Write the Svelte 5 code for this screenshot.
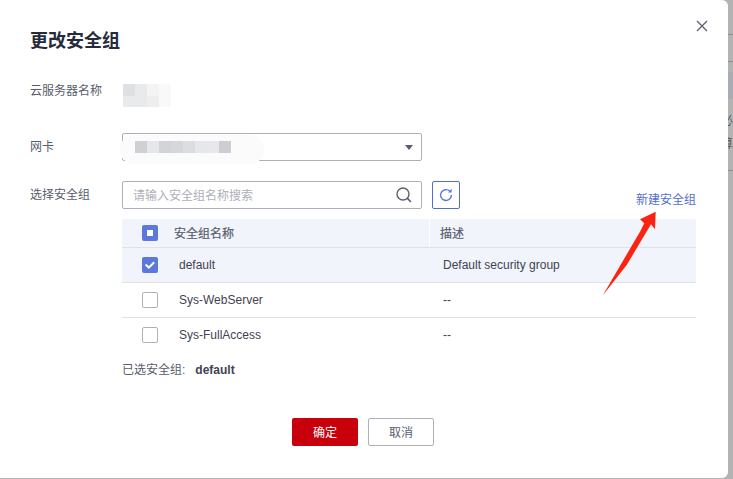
<script lang="ts">
	const groups = [
		{ name: 'default', desc: 'Default security group', checked: true },
		{ name: 'Sys-WebServer', desc: '--', checked: false },
		{ name: 'Sys-FullAccess', desc: '--', checked: false }
	];

	// mosaic cells over the redacted values
	const nameCells = ['#dfe0e3', '#e9eaec', '#f4f4f5', '#f8f9f9', '#e9eaec', '#e9eaec', '#eeeeef', '#f9f9fa'];
	const nicCells = ['#cfd0d4', '#e6e7e9', '#d3d4d8', '#d6d7da', '#dcdde0', '#e6e7e9', '#e8e8ea', '#cdced2'];
</script>

<div class="page">
	<div class="backdrop">
		<span class="bg-line one"></span>
		<span class="bg-line two"></span>
		<span class="bg-band"></span>
		<span class="bg-glyph first">必</span>
		<span class="bg-glyph second">算</span>
		<span class="bg-line three"></span>
	</div>

	<div class="dialog">
		<button class="close" aria-label="关闭">
			<svg width="12" height="12" viewBox="0 0 12 12"><path d="M1 1l10 10M11 1L1 11" stroke="#5c6070" stroke-width="1.3" fill="none" /></svg>
		</button>

		<h1>更改安全组</h1>

		<div class="row name-row">
			<div class="label">云服务器名称</div>
			<div class="mosaic small">
				{#each nameCells as c}
					<i style="background:{c}"></i>
				{/each}
			</div>
		</div>

		<div class="row nic-row">
			<div class="label">网卡</div>
			<div class="select">
				<div class="smear"></div>
				<div class="mosaic wide">
					{#each nicCells as c}
						<i style="background:{c}"></i>
					{/each}
				</div>
				<span class="caret"></span>
			</div>
		</div>

		<div class="row search-row">
			<div class="label">选择安全组</div>
			<div class="search">
				<span class="placeholder">请输入安全组名称搜索</span>
				<svg width="18" height="18" viewBox="0 0 18 18" fill="none" stroke="#5c6070" stroke-width="1.4">
					<circle cx="8" cy="8" r="6" />
					<path d="M12.4 12.4L16 16" stroke-width="1.6" />
				</svg>
			</div>
			<button class="refresh" aria-label="刷新">
				<svg width="16" height="16" viewBox="0 0 16 16" fill="none">
					<path d="M13.4 8a5.4 5.4 0 1 1-1.7-3.9" stroke="#5b78dd" stroke-width="1.4" />
					<path d="M13.6 1.8v3.6H10z" fill="#5b78dd" />
				</svg>
			</button>
			<a class="create" href="#new">新建安全组</a>
		</div>

		<div class="table">
			<div class="tr head">
				<div class="check-cell"><span class="box partial"><b></b></span></div>
				<div class="name-cell">安全组名称</div>
				<div class="desc-cell">描述</div>
			</div>
			{#each groups as g}
				<div class="tr" class:selected={g.checked}>
					<div class="check-cell">
						<span class="box" class:on={g.checked}>
							{#if g.checked}
								<svg width="16" height="16" viewBox="0 0 16 16" fill="none"><path d="M3.6 7.6l3.2 3 5.4-5.4" stroke="#fff" stroke-width="2" /></svg>
							{/if}
						</span>
					</div>
					<div class="name-cell">{g.name}</div>
					<div class="desc-cell">{g.desc}</div>
				</div>
			{/each}
		</div>

		<div class="chosen">
			<span class="chosen-label">已选安全组:</span>
			<strong>default</strong>
		</div>

		<div class="actions">
			<button class="btn primary">确定</button>
			<button class="btn">取消</button>
		</div>

		<svg class="arrow" width="60" height="90" viewBox="0 0 60 90">
			<path d="M1.7 85.5L39 21.7L43.3 13.3L39 9.3L54.7 1.7L54 19.3L50 14.3L25.7 55Z" fill="#fb2312" />
		</svg>
	</div>
</div>

<style>
	:global(body) {
		margin: 0;
	}

	.page {
		width: 733px;
		height: 479px;
		position: relative;
		overflow: hidden;
		background: #b3b3b3;
		font-family: 'Liberation Sans', 'Noto Sans CJK SC', sans-serif;
		font-size: 12px;
		color: #3f4352;
	}

	.backdrop {
		position: absolute;
		top: 0;
		right: 0;
		width: 5px;
		height: 479px;
		overflow: hidden;
	}

	.bg-line {
		position: absolute;
		left: 0;
		right: 0;
		height: 1px;
		background: #8e8f92;
	}

	.bg-line.one {
		top: 34px;
	}

	.bg-line.two {
		top: 61px;
	}

	.bg-line.three {
		top: 170px;
	}

	.bg-band {
		position: absolute;
		left: 0;
		right: 0;
		top: 72px;
		height: 27px;
		background: #a9acb2;
	}

	.bg-glyph {
		position: absolute;
		left: -7px;
		font-size: 12px;
		line-height: 14px;
		color: #5e5f63;
	}

	.bg-glyph.first {
		top: 114px;
	}

	.bg-glyph.second {
		top: 137px;
	}

	.dialog {
		position: relative;
		width: 728px;
		height: 478px;
		box-sizing: border-box;
		padding: 0 32px 0 30px;
		background: #fff;
		border-radius: 0 6px 6px 0;
	}

	.close {
		position: absolute;
		top: 20px;
		right: 20px;
		width: 12px;
		height: 12px;
		padding: 0;
		border: 0;
		background: none;
		display: flex;
	}

	h1 {
		margin: 0;
		padding-top: 29px;
		height: 24px;
		font-size: 18px;
		line-height: 24px;
		font-weight: 700;
		color: #252b3a;
		box-sizing: content-box;
	}

	.row {
		display: flex;
		align-items: center;
	}

	.label {
		width: 92px;
		flex: none;
		color: #575d6c;
		line-height: 16px;
	}

	.name-row {
		margin-top: 30px;
		height: 24px;
		align-items: flex-start;
	}

	.nic-row {
		margin-top: 26px;
		height: 28px;
	}

	.search-row {
		margin-top: 20px;
		height: 28px;
		position: relative;
	}

	.mosaic {
		display: grid;
		grid-template-columns: repeat(4, 12px);
	}

	.mosaic i {
		display: block;
		height: 11px;
	}

	.mosaic.small {
		margin: 1px 0 0 1px;
		filter: blur(0.3px);
	}

	.mosaic.small i {
		height: 11.5px;
	}

	.select,
	.search {
		position: relative;
		width: 300px;
		height: 28px;
		box-sizing: border-box;
		border: 1px solid #adb0b8;
		border-radius: 2px;
		display: flex;
		align-items: center;
		background: #fff;
	}

	.smear {
		position: absolute;
		left: -3px;
		top: 1px;
		width: 144px;
		height: 29px;
		border-radius: 14px;
		background: #fbfbfb;
	}

	.mosaic.wide {
		position: relative;
		margin-left: 12px;
		grid-template-columns: repeat(8, 12px);
	}

	.mosaic.wide i {
		height: 12px;
	}

	.caret {
		position: absolute;
		right: 8px;
		top: 11px;
		width: 0;
		height: 0;
		border-left: 4px solid transparent;
		border-right: 4px solid transparent;
		border-top: 5px solid #575d6c;
	}

	.search {
		padding: 0 8px 0 10px;
		justify-content: space-between;
	}

	.placeholder {
		color: #adb0b8;
		padding-bottom: 2px;
	}

	.refresh {
		margin-left: 10px;
		width: 28px;
		height: 28px;
		box-sizing: border-box;
		padding: 0;
		border: 1px solid #526ecc;
		border-radius: 2px;
		background: #fff;
		display: flex;
		align-items: center;
		justify-content: center;
	}

	.create {
		position: absolute;
		right: 0;
		top: 5px;
		color: #526ecc;
		text-decoration: none;
		line-height: 28px;
	}

	.table {
		margin-top: 10px;
		width: 574px;
		margin-left: 92px;
	}

	.tr {
		display: flex;
		align-items: center;
		height: 35px;
		box-sizing: border-box;
		border-bottom: 1px solid #dfe1e6;
	}

	.tr:last-child {
		border-bottom-color: transparent;
	}

	.tr.head {
		height: 29px;
		background: #f1f4fb;
		font-weight: 400;
		color: #575d6c;
		-webkit-text-stroke: 0.2px #575d6c;
	}

	.tr.selected {
		background: #f1f4fb;
	}

	.check-cell {
		width: 20px;
		flex: none;
		padding-left: 20px;
		display: flex;
	}

	.name-cell {
		width: 268px;
		flex: none;
		padding-left: 17px;
		box-sizing: border-box;
		align-self: stretch;
		display: flex;
		align-items: center;
	}

	.head .name-cell {
		padding: 0 0 2px 12px;
		border-right: 1px solid #fff;
	}

	.desc-cell {
		padding-left: 13px;
	}

	.head .desc-cell {
		padding: 0 0 2px 10px;
	}

	.box {
		width: 16px;
		height: 16px;
		box-sizing: border-box;
		border: 1px solid #adb0b8;
		border-radius: 2px;
		background: #fff;
		display: flex;
		align-items: center;
		justify-content: center;
	}

	.box.on,
	.box.partial {
		border: 0;
		background: #5b78dd;
	}

	.box b {
		width: 6px;
		height: 6px;
		background: #fff;
	}

	.chosen {
		margin: 8px 0 0 92px;
		line-height: 18px;
		display: flex;
		gap: 10px;
	}

	.chosen-label {
		color: #575d6c;
	}

	.chosen strong {
		font-weight: 700;
	}

	.actions {
		margin-top: 39px;
		display: flex;
		justify-content: center;
		gap: 10px;
	}

	.btn {
		width: 66px;
		height: 28px;
		box-sizing: border-box;
		border: 1px solid #adb0b8;
		border-radius: 2px;
		background: #fff;
		font: inherit;
		color: #575d6c;
		padding: 0 0 2px;
	}

	.btn.primary {
		border: 0;
		background: #c7000b;
		color: #fff;
	}

	.arrow {
		position: absolute;
		left: 601px;
		top: 210px;
	}
</style>
